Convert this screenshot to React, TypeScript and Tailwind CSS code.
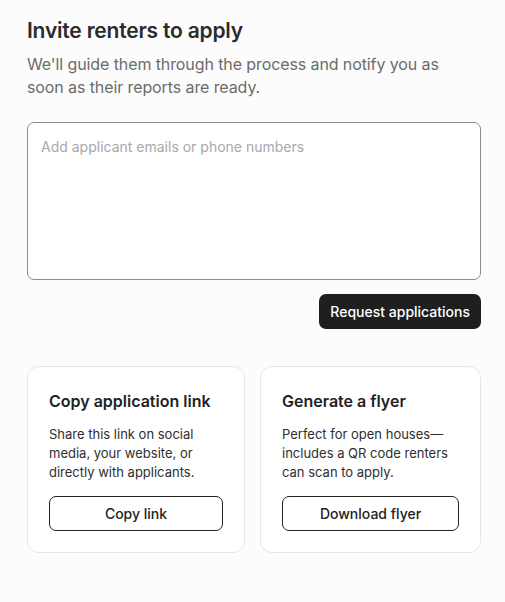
export default function App() {
  return (
    <div
      className="min-h-[602px] w-full bg-[#fcfcfc] text-[#222]"
      style={{ fontFamily: 'Inter, "Liberation Sans", sans-serif' }}
    >
      <div className="pl-[27px] pr-[24px] pt-[16px] pb-10">
        <h1 className="text-[21px] leading-[30px] font-semibold text-[#2b2b2b] tracking-[-0.2px]">
          Invite renters to apply
        </h1>
        <p className="mt-[7px] max-w-[420px] text-[16px] leading-[23px] text-[#6b6b6b] tracking-[-0.1px]">
          We'll guide them through the process and notify you as soon as their reports are ready.
        </p>

        <textarea
          placeholder="Add applicant emails or phone numbers"
          className="mt-[23px] block w-full h-[158px] resize-none rounded-[7px] border border-[#8c8c8c] bg-white px-[13px] py-[14px] text-[14px] leading-[20px] text-[#222] placeholder:text-[#a8a8a8] outline-none"
        />

        <div className="mt-[14px] flex justify-end">
          <button
            type="button"
            className="h-[35px] rounded-[7px] bg-[#1f1f1f] px-[11px] text-[14px] font-medium text-white"
          >
            Request applications
          </button>
        </div>

        <div className="mt-[37px] grid grid-cols-[218px_221px] gap-[15px]">
          <ActionCard
            title="Copy application link"
            body="Share this link on social media, your website, or directly with applicants."
            action="Copy link"
          />
          <ActionCard
            title="Generate a flyer"
            body="Perfect for open houses—includes a QR code renters can scan to apply."
            action="Download flyer"
          />
        </div>
      </div>
    </div>
  );
}

interface ActionCardProps {
  title: string;
  body: string;
  action: string;
}

function ActionCard({ title, body, action }: ActionCardProps) {
  return (
    <div className="rounded-[12px] border border-[#e6e6e6] bg-white px-[21px] pt-[22px] pb-[21px]">
      <h2 className="text-[16px] leading-[24px] font-semibold text-[#222]">{title}</h2>
      <p className="mt-[12px] text-[13px] leading-[19px] text-[#2e2e2e]">{body}</p>
      <button
        type="button"
        className="mt-[14px] h-[35px] w-full rounded-[7px] border border-[#222] bg-white text-[14px] font-medium text-[#222]"
      >
        {action}
      </button>
    </div>
  );
}
